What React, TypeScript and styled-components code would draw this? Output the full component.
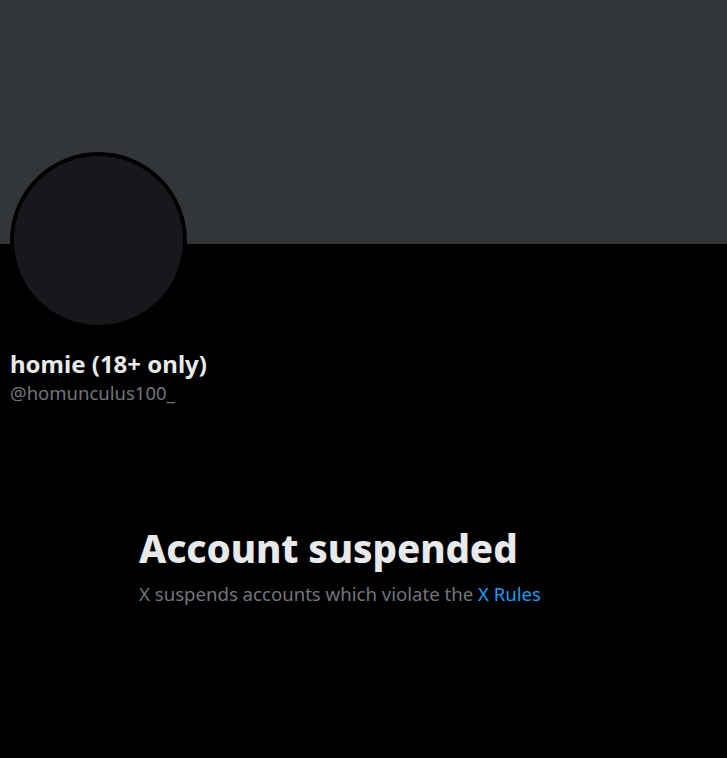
import React from "react";
import styled, { createGlobalStyle } from "styled-components";

const Global = createGlobalStyle`
  html, body { margin: 0; padding: 0; background: #000; }
  body { font-family: "Noto Sans", "Liberation Sans", sans-serif; }
`;

const Page = styled.div`
  width: 727px;
  height: 758px;
  background: #000;
  display: flex;
  flex-direction: column;
  overflow: hidden;
`;

const Banner = styled.div`
  height: 244px;
  background: #333639;
  flex-shrink: 0;
`;

const ProfileInfo = styled.div`
  padding: 0 10px;
  display: flex;
  flex-direction: column;
`;

const Avatar = styled.div`
  width: 169px;
  height: 169px;
  margin-top: -92px;
  border-radius: 50%;
  background: #16181c;
  border: 4px solid #000;
`;

const Name = styled.div`
  margin-top: 19px;
  font-size: 24px;
  font-weight: 700;
  color: #e7e9ea;
  line-height: 32px;
`;

const Handle = styled.div`
  margin-top: 1px;
  font-size: 18.5px;
  color: #71767b;
  line-height: 24px;
`;

const Empty = styled.div`
  padding: 121px 0 0 139px;
  display: flex;
  flex-direction: column;
`;

const Title = styled.div`
  font-size: 38.5px;
  font-weight: 800;
  color: #e7e9ea;
  line-height: 44px;
  letter-spacing: -0.1px;
`;

const Sub = styled.div`
  margin-top: 12px;
  font-size: 18.6px;
  color: #71767b;
  line-height: 24px;
`;

const Link = styled.a`
  color: #1d9bf0;
  text-decoration: none;
`;

export default function App() {
  return (
    <Page>
      <Global />
      <Banner />
      <ProfileInfo>
        <Avatar />
        <Name>homie (18+ only)</Name>
        <Handle>@homunculus100_</Handle>
      </ProfileInfo>
      <Empty>
        <Title>Account suspended</Title>
        <Sub>
          X suspends accounts which violate the <Link href="#">X Rules</Link>
        </Sub>
      </Empty>
    </Page>
  );
}
